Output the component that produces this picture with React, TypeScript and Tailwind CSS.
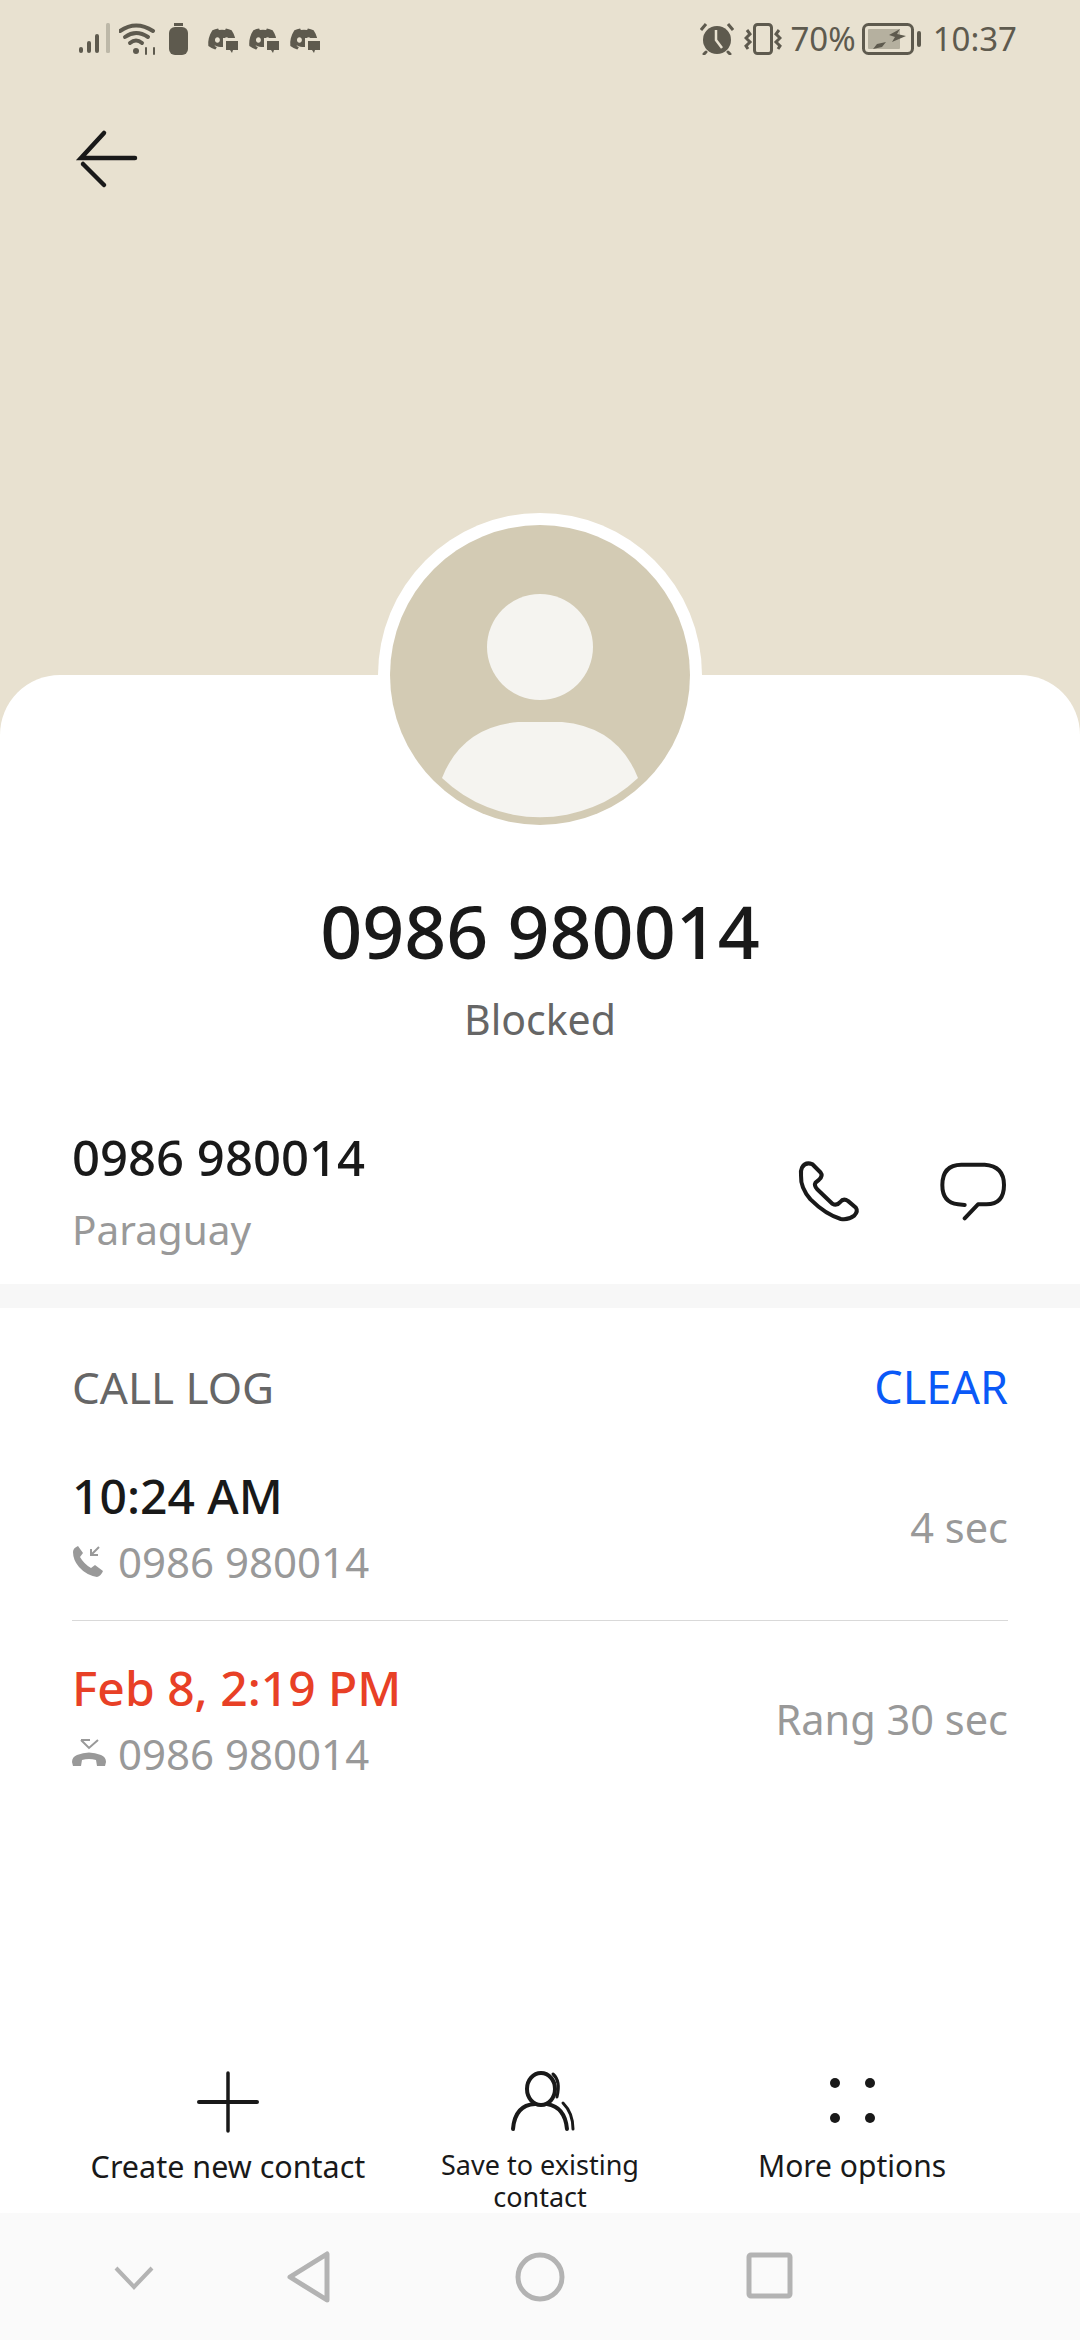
import React from "react";
import { FaDiscord } from "react-icons/fa";

const font = { fontFamily: '"Noto Sans", sans-serif' };

function GameIcon() {
  return (
    <span className="relative block w-[28px] h-[26px]">
      <FaDiscord className="absolute left-[-1px] top-[-2px] text-[#5e5a4e]" size={30} />
      <svg className="absolute right-[-2px] bottom-[-1px]" width="15" height="15" viewBox="0 0 15 15">
        <path d="M0 0H15V12H0Z" fill="#e8e1d0" />
        <path d="M3 3H15V12H10L9 15L7 12H3Z" fill="#5e5a4e" />
      </svg>
    </span>
  );
}

function StatusBar() {
  return (
    <div className="flex items-center justify-between h-[52px] mt-[13px] pl-[79px] pr-[63px] text-[#5e5a4e]">
      <div className="flex items-center">
        <svg width="32" height="32" viewBox="0 0 32 32">
          <rect x="0" y="24" width="4" height="6" rx="2" fill="#5e5a4e" />
          <rect x="8" y="18" width="4" height="12" rx="2" fill="#5e5a4e" />
          <rect x="16" y="11" width="4" height="19" rx="2" fill="#5e5a4e" />
          <rect x="27" y="0" width="4" height="30" rx="1.500" fill="#bdb8a8" />
        </svg>
        <svg className="ml-[8px]" width="38" height="32" viewBox="0 0 38 32" fill="none" stroke="#5e5a4e" strokeWidth="4" strokeLinecap="round">
          <path d="M1 8Q17 -3 34 8" />
          <path d="M6 14Q17 6 29 14" />
          <path d="M11 20Q17 15 23 20" />
          <circle cx="17" cy="28" r="3" fill="#5e5a4e" stroke="none" />
          <path d="M27 25V31M35 25V31" strokeWidth="2" />
        </svg>
        <svg className="ml-[12px]" width="19" height="32" viewBox="0 0 19 32">
          <rect x="5" y="0" width="9" height="3" fill="#5e5a4e" />
          <rect x="0" y="4" width="19" height="28" rx="6" fill="#5e5a4e" />
        </svg>
        <div className="flex items-center gap-[13px] ml-[20px]">
          <GameIcon />
          <GameIcon />
          <GameIcon />
        </div>
      </div>
      <div className="flex items-center">
        <svg width="34" height="32" viewBox="0 0 34 32">
          <path d="M1 7L6 1M33 7L28 1" stroke="#5e5a4e" strokeWidth="3" />
          <path d="M6 29L4 31M28 29L30 31" stroke="#5e5a4e" strokeWidth="3" strokeLinecap="round" />
          <circle cx="17" cy="17" r="14" fill="#5e5a4e" />
          <path d="M16 7V17L22 25" stroke="#e8e1d0" strokeWidth="2.500" fill="none" />
        </svg>
        <svg className="ml-[10px]" width="38" height="32" viewBox="0 0 38 32" fill="none" stroke="#5e5a4e">
          <rect x="10.500" y="1.500" width="17" height="29" rx="3" strokeWidth="3" />
          <path d="M3 7L6 11L2 15L6 19L2 23L4 26M35 7L32 11L36 15L32 19L36 23L34 26" strokeWidth="3" />
        </svg>
        <span className="ml-[8px] text-[33px] leading-[40px]" style={font}>70%</span>
        <svg className="ml-[6px]" width="60" height="32" viewBox="0 0 60 32" fill="none">
          <rect x="1.500" y="1.500" width="49" height="29" rx="5" stroke="#5e5a4e" strokeWidth="3" />
          <rect x="6" y="6" width="32" height="20" rx="1" fill="#b5b09f" />
          <path d="M15 21L24 19L20 24L11 26ZM27 12L38 6L35 11L44 13L30 19L33 14Z" fill="#5e5a4e" />
          <rect x="55" y="8" width="4" height="16" rx="2" fill="#5e5a4e" />
        </svg>
        <span className="ml-[11px] text-[33px] leading-[40px]" style={font}>10:37</span>
      </div>
    </div>
  );
}

function Avatar() {
  return (
    <div className="w-[324px] h-[324px] rounded-full bg-white flex items-center justify-center -mt-[162px]">
      <div className="relative w-[300px] h-[300px] rounded-full bg-[#d3cbb4] overflow-hidden">
        <div className="absolute left-[97px] top-[69px] w-[106px] h-[106px] rounded-full bg-[#f5f4f0]" />
        <svg className="absolute left-0 top-0" width="300" height="300" viewBox="0 0 300 300">
          <path d="M52 253Q72 202 128 197H172Q228 202 248 253A142 142 0 0 1 52 253Z" fill="#f5f4f0" />
        </svg>
      </div>
    </div>
  );
}

function CallInIcon() {
  return (
    <svg width="32" height="32" viewBox="0 0 32 32" className="shrink-0">
      <path d="M1 6Q1 2 6 0L11 7L8 11Q12 18 19 22L23 19L31 25Q29 30 25 31Q14 29 7 21Q1 14 1 6Z" fill="#999999" />
      <path d="M27 1L19 9M19 3V9H26" stroke="#999999" strokeWidth="2" fill="none" />
    </svg>
  );
}

function MissedIcon() {
  return (
    <svg width="34" height="32" viewBox="0 0 34 32" className="shrink-0">
      <path d="M0 24Q0 19 5 17Q17 12 29 17Q34 19 34 24L33 28H25L24 22Q17 20 10 22L9 28H1Z" fill="#999999" />
      <path d="M9 2L17 10L26 2M9 2H18" stroke="#999999" strokeWidth="2" fill="none" />
    </svg>
  );
}

function LogRow({ title, red, icon, right }: { title: string; red?: boolean; icon: React.ReactNode; right: string }) {
  return (
    <div className="flex items-center justify-between">
      <div>
        <div className={`text-[48px] leading-[60px] font-medium ${red ? "text-[#e84026]" : "text-[#191919]"}`}>{title}</div>
        <div className="flex items-center mt-[11px] text-[42px] leading-[50px] text-[#999999]">
          <span className="w-[46px] flex">{icon}</span>
          <span>0986 980014</span>
        </div>
      </div>
      <div className="text-[41.500px] leading-[50px] text-[#999999]">{right}</div>
    </div>
  );
}

function Action({ icon, label, kind }: { icon: React.ReactNode; label: string; kind: "create" | "save" | "more" }) {
  const cls =
    kind === "create"
      ? "mt-[3px] text-[30.500px] leading-[48px]"
      : kind === "more"
        ? "mt-[3px] text-[30px] leading-[48px]"
        : "mt-[10px] text-[27px] leading-[32px] w-[230px]";
  return (
    <div className="flex flex-col items-center">
      <div className="w-[72px] h-[72px]">{icon}</div>
      <div className={`text-center text-[#191919] ${cls}`}>{label}</div>
    </div>
  );
}

export default function App() {
  return (
    <div className="w-[1080px] h-[2340px] flex flex-col overflow-hidden bg-[#e8e1d0]" style={font}>
      <div className="h-[675px] shrink-0">
        <StatusBar />
        <svg className="ml-[75px] mt-[64px]" width="64" height="60" viewBox="0 0 64 60" fill="none" stroke="#191919" strokeWidth="4.500" strokeLinecap="round">
          <path d="M29 4L6 29H60" />
          <path d="M8 35L29 56" />
        </svg>
      </div>
      <div className="flex-1 flex flex-col bg-white rounded-t-[60px] min-h-0">
        <div className="flex flex-col items-center">
          <Avatar />
          <h1 className="mt-[49px] text-[73.500px] leading-[90px] font-medium text-[#191919]">0986 980014</h1>
          <div className="mt-[18px] text-[41px] leading-[50px] text-[#666666]">Blocked</div>
        </div>
        <div className="flex items-center justify-between pl-[72px] pr-[72px] mt-[83px] pb-[29px]">
          <div>
            <div className="text-[49px] leading-[60px] font-medium text-[#191919]">0986 980014</div>
            <div className="mt-[18px] text-[40.500px] leading-[50px] text-[#999999]">Paraguay</div>
          </div>
          <div className="flex items-center">
            <svg width="64" height="64" viewBox="110 110 190 190" fill="none" stroke="#191919" strokeWidth="12" strokeLinejoin="round">
              <path d="M125 135Q135 118 155 125L180 150Q188 160 175 172L165 180Q160 188 170 200L215 243Q228 250 238 238Q248 225 262 235L285 255Q292 265 280 278Q262 292 240 288Q195 275 150 230Q120 195 122 160Q120 145 125 135Z" />
            </svg>
            <svg className="ml-[77px]" width="70" height="60" viewBox="530 120 210 180" fill="none" stroke="#191919" strokeWidth="12" strokeLinecap="round" strokeLinejoin="round">
              <path d="M610 252L590 250Q543 245 543 192Q543 132 600 131L670 131Q728 135 728 192Q728 250 675 250L650 250L610 292" />
            </svg>
          </div>
        </div>
        <div className="h-[24px] bg-[#f7f7f7] shrink-0" />
        <div className="px-[72px] pt-[54px]">
          <div className="flex justify-between text-[44px] leading-[50px]">
            <span className="text-[#666666]">CALL LOG</span>
            <span className="text-[#0a59f7] text-[45px]">CLEAR</span>
          </div>
          <div className="mt-[54px]">
            <LogRow title="10:24 AM" icon={<CallInIcon />} right="4 sec" />
          </div>
          <div className="h-px bg-[#d9d9d9] mt-[33px] mb-[37px]" />
          <LogRow title="Feb 8, 2:19 PM" red icon={<MissedIcon />} right="Rang 30 sec" />
        </div>
        <div className="flex-1" />
        <div className="grid grid-cols-3 px-[72px] h-[146px]">
          <Action
            kind="create"
            label="Create new contact"
            icon={
              <svg width="72" height="72" viewBox="0 0 72 72" stroke="#191919" strokeLinecap="round">
                <path d="M36 6V64" strokeWidth="3.500" />
                <path d="M7 35H65" strokeWidth="4" />
              </svg>
            }
          />
          <Action
            kind="save"
            label="Save to existing contact"
            icon={
              <svg className="ml-[3px]" width="72" height="72" viewBox="0 0 72 72" fill="none" stroke="#191919" strokeLinecap="round">
                <ellipse cx="34" cy="22" rx="14" ry="16" strokeWidth="4" />
                <path d="M6 62Q8 38 28 37M40 37Q58 40 60 62" strokeWidth="4" />
                <path d="M46 7Q54 14 50 30M56 36Q66 46 66 62" strokeWidth="3" />
              </svg>
            }
          />
          <Action
            kind="more"
            label="More options"
            icon={
              <svg width="72" height="72" viewBox="0 0 72 72" fill="#191919">
                <circle cx="19" cy="16" r="5" />
                <circle cx="54" cy="16" r="5" />
                <circle cx="19" cy="51" r="5" />
                <circle cx="54" cy="51" r="5" />
              </svg>
            }
          />
        </div>
        <div className="h-[127px] bg-[#fafafa] shrink-0 flex items-start relative">
          <svg className="absolute left-[113px] top-[52px]" width="42" height="26" viewBox="0 0 42 26" fill="none" stroke="#b3b3b3" strokeWidth="4">
            <path d="M3 3L21 22L39 3" />
          </svg>
          <svg className="absolute left-[286px] top-[38px]" width="46" height="52" viewBox="0 0 46 52" fill="none" stroke="#b3b3b3" strokeWidth="5" strokeLinejoin="round">
            <path d="M41 3V49L4 26Z" />
          </svg>
          <svg className="absolute left-[514px] top-[38px]" width="52" height="52" viewBox="0 0 52 52" fill="none" stroke="#b3b3b3" strokeWidth="5">
            <circle cx="26" cy="26" r="22" />
          </svg>
          <svg className="absolute left-[745px] top-[38px]" width="50" height="50" viewBox="0 0 50 50" fill="none" stroke="#b3b3b3" strokeWidth="5">
            <rect x="4" y="4" width="41" height="41" rx="2" />
          </svg>
        </div>
      </div>
    </div>
  );
}
